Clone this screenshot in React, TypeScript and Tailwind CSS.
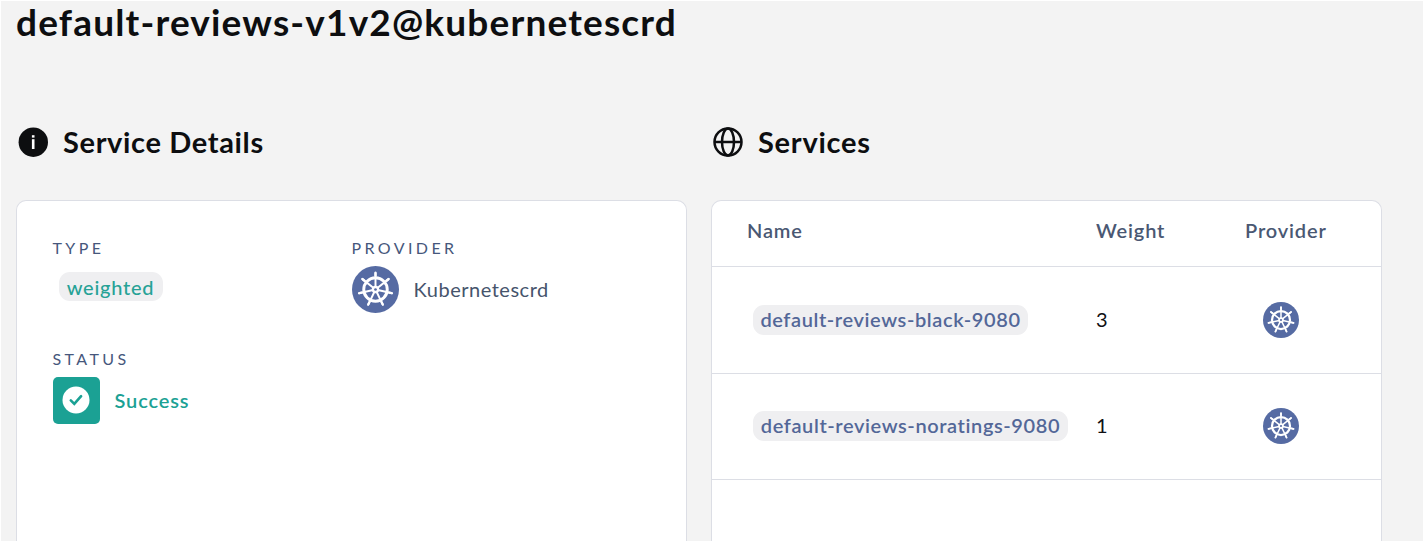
import React from "react";

const SPOKES = [0, 1, 2, 3, 4, 5, 6].map((i) => (i * 360) / 7);

function KubernetesIcon({ className }: { className: string }) {
  return (
    <svg viewBox="0 0 48 48" className={className}>
      <circle cx="24" cy="24" r="24" fill="#566ba3" />
      <g stroke="#ffffff" fill="none" strokeLinecap="round">
        <circle cx="24" cy="24" r="12" strokeWidth="3" />
        {SPOKES.map((angle) => (
          <g key={angle} transform={`rotate(${angle} 24 24)`}>
            <path d="M24 21.5V6.6" strokeWidth="2" />
            <path d="M24 9.6V7.2" strokeWidth="2.4" />
          </g>
        ))}
      </g>
      <circle cx="24" cy="24" r="3.8" fill="#ffffff" />
      <circle cx="24" cy="24" r="1.4" fill="#566ba3" />
    </svg>
  );
}

function InfoIcon() {
  return (
    <svg viewBox="0 0 30 30" className="size-[30px] shrink-0">
      <circle cx="15.3" cy="15.2" r="14.7" fill="#0d0e10" />
      <rect x="13.9" y="8.2" width="2.6" height="2.4" fill="#ffffff" />
      <rect x="13.9" y="12.2" width="2.6" height="9.8" fill="#ffffff" />
    </svg>
  );
}

function GlobeIcon() {
  return (
    <svg viewBox="0 0 30 30" className="size-[30px] shrink-0" fill="none" stroke="#0d0e10" strokeWidth="2.5">
      <circle cx="15" cy="15" r="13.5" />
      <ellipse cx="15" cy="15" rx="6" ry="13.5" />
      <path d="M1.5 15h27" />
    </svg>
  );
}

function Label({ children }: { children: React.ReactNode }) {
  return <div className="h-5 text-[16px] leading-5 tracking-[3.4px] text-[#46577c]">{children}</div>;
}

const services = [
  { name: "default-reviews-black-9080", weight: 3, chip: "w-[275px]" },
  { name: "default-reviews-noratings-9080", weight: 1, chip: "w-[315px]" },
];

export default function App() {
  return (
    <div className="h-[543px] w-[1425px] bg-white pt-px pr-0.5 pb-0.5 pl-px font-['Lato','Open_Sans',sans-serif]">
      <div className="flex h-[540px] flex-col bg-[#f3f3f3] pl-[15px]">
        <h1 className="h-[42px] text-[37px] leading-[41px] font-bold tracking-[1.17px] whitespace-nowrap text-[#0d0e10]">
          default-reviews-v1v2@kubernetescrd
        </h1>
        <div className="mt-[70px] flex gap-6">
          <section className="w-[671px]">
            <h2 className="flex h-[58px] items-center gap-[15px] pl-0.5 text-[29px] font-bold tracking-[0.65px] text-[#0d0e10]">
              <InfoIcon />
              <span>Service Details</span>
            </h2>
            <div className="mt-[29px] grid h-[341px] grid-cols-[299px_1fr] grid-rows-[111px_1fr] rounded-t-[10px] border-[1.5px] border-b-0 border-[#dcdee5] bg-white pt-[37px] pl-[35.5px]">
              <div>
                <Label>TYPE</Label>
                <div className="mt-[14px] ml-1.5 flex h-[29px] w-[104px] items-center justify-center rounded-[11px] bg-[#efeff1] text-[20px] font-medium tracking-[0.75px] text-[#26a296]">
                  weighted
                </div>
              </div>
              <div>
                <Label>PROVIDER</Label>
                <div className="mt-[7.5px] flex items-center gap-[15px] text-[20px] tracking-[0.52px] text-[#46546c]">
                  <KubernetesIcon className="size-[47px]" />
                  <span>Kubernetescrd</span>
                </div>
              </div>
              <div>
                <Label>STATUS</Label>
                <div className="mt-[7.5px] flex items-center gap-[15px] text-[20px] font-semibold tracking-[0.85px] text-[#1ba194]">
                  <div className="flex size-[47px] items-center justify-center rounded-[5px] bg-[#1ba194]">
                    <svg viewBox="0 0 28 28" className="size-7">
                      <circle cx="14" cy="14" r="13.5" fill="#ffffff" />
                      <path d="m8.8 14.4 3.5 3.5 6.8-7.7" fill="none" stroke="#1ba194" strokeWidth="2.6" strokeLinecap="round" />
                    </svg>
                  </div>
                  <span>Success</span>
                </div>
              </div>
            </div>
          </section>
          <section className="w-[671px]">
            <h2 className="flex h-[58px] items-center gap-[15px] pl-0.5 text-[29px] font-bold tracking-[0.75px] text-[#0d0e10]">
              <GlobeIcon />
              <span>Services</span>
            </h2>
            <div className="mt-[29px] h-[341px] rounded-t-[10px] border-[1.5px] border-b-0 border-[#dcdee5] bg-white text-[20px]">
              <div className="grid h-[66px] grid-cols-[349px_149px_1fr] border-b-[1.5px] border-[#dcdee5] pt-[14px] pl-[35px] leading-[30px] font-semibold tracking-[0.85px] text-[#4a5873]">
                <span>Name</span>
                <span>Weight</span>
                <span>Provider</span>
              </div>
              {services.map((s) => (
                <div key={s.name} className="grid h-[106.6px] grid-cols-[349px_149px_1fr] items-center border-b-[1.5px] border-[#dcdee5] pl-[35px]">
                  <div className={`ml-1.5 flex h-[30px] items-center justify-center rounded-[11px] bg-[#efeff1] pb-0.5 font-semibold tracking-[0.6px] whitespace-nowrap text-[#536798] ${s.chip}`}>
                    {s.name}
                  </div>
                  <span className="pb-0.5 text-[#101114]">{s.weight}</span>
                  <KubernetesIcon className="ml-[17.5px] size-9" />
                </div>
              ))}
            </div>
          </section>
        </div>
      </div>
    </div>
  );
}
